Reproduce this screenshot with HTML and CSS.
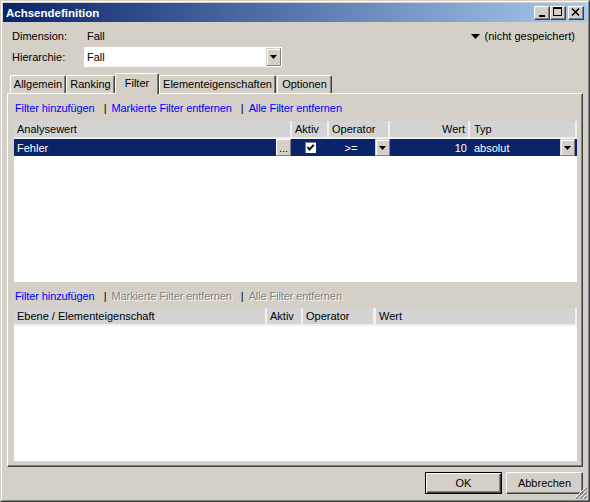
FILE: index.html
```html
<!DOCTYPE html>
<html>
<head>
<meta charset="utf-8">
<title>Achsendefinition</title>
<link rel="stylesheet" href="styles.css">
</head>
<body>
<div class="window">
  <div class="frame">
    <div class="titlebar">
      <span class="title">Achsendefinition</span>
      <div class="tbtns">
        <span class="tbtn"><svg width="14" height="12" viewBox="0 0 14 12"><rect x="4" y="8" width="6" height="2" fill="#000"/></svg></span>
        <span class="tbtn"><svg width="14" height="12" viewBox="0 0 14 12"><rect x="2" y="0" width="9" height="2" fill="#000"/><rect x="2" y="0" width="1" height="9" fill="#000"/><rect x="10" y="0" width="1" height="9" fill="#000"/><rect x="2" y="8" width="9" height="1" fill="#000"/></svg></span>
        <span class="tbtn close"><svg width="14" height="12" viewBox="0 0 14 12"><path d="M3 1.5L10 8.5M10 1.5L3 8.5" stroke="#000" stroke-width="1.6" fill="none"/></svg></span>
      </div>
    </div>
    <div class="content">
      <div class="row dim">
        <span class="lbl">Dimension:</span>
        <span class="val">Fall</span>
        <span class="status"><svg width="9" height="5" viewBox="0 0 9 5"><polygon points="0,0 9,0 4.5,5" fill="#000"/></svg><span>(nicht gespeichert)</span></span>
      </div>
      <div class="row hier">
        <span class="lbl">Hierarchie:</span>
        <div class="combo">
          <span class="combo-text">Fall</span>
          <span class="ddbtn combo-dd"><svg width="7" height="4" viewBox="0 0 7 4"><polygon points="0,0 7,0 3.5,4" fill="#000"/></svg></span>
        </div>
      </div>
      <div class="tabs">
        <span class="tab t-allg">Allgemein</span>
        <span class="tab t-rank">Ranking</span>
        <span class="tab sel t-filt">Filter</span>
        <span class="tab t-elem">Elementeigenschaften</span>
        <span class="tab t-opt">Optionen</span>
      </div>
      <div class="panel">
        <div class="links">
          <span class="lnk">Filter hinzufügen</span><span class="sep">|</span><span class="lnk">Markierte Filter entfernen</span><span class="sep">|</span><span class="lnk">Alle Filter entfernen</span>
        </div>
        <div class="grid g1">
          <div class="ghead">
            <span class="hc h1a">Analysewert</span>
            <span class="hc h1b">Aktiv</span>
            <span class="hc h1c">Operator</span>
            <span class="hc h1d">Wert</span>
            <span class="hc h1e">Typ</span>
          </div>
          <div class="grow">
            <span class="rc r1">
              <span class="cell-text">Fehler</span>
              <span class="dots">...</span>
            </span>
            <span class="rc r2">
              <svg class="chk" width="11" height="11" viewBox="0 0 11 11"><rect x="0" y="0" width="11" height="11" fill="#fff"/><rect x="0" y="0" width="11" height="1" fill="#808080"/><rect x="0" y="0" width="1" height="11" fill="#808080"/><polyline points="2.5,5 4.5,7.5 8.7,2.8" stroke="#000" stroke-width="2" fill="none"/></svg>
            </span>
            <span class="rc r3">
              <span class="op">&gt;=</span>
              <span class="ddbtn"><svg width="7" height="4" viewBox="0 0 7 4"><polygon points="0,0 7,0 3.5,4" fill="#000"/></svg></span>
            </span>
            <span class="rc r4">10</span>
            <span class="rc r5">
              <span class="cell-text typ">absolut</span>
              <span class="ddbtn"><svg width="7" height="4" viewBox="0 0 7 4"><polygon points="0,0 7,0 3.5,4" fill="#000"/></svg></span>
            </span>
          </div>
        </div>
        <div class="links links2">
          <span class="lnk">Filter hinzufügen</span><span class="sep">|</span><span class="lnk off">Markierte Filter entfernen</span><span class="sep">|</span><span class="lnk off">Alle Filter entfernen</span>
        </div>
        <div class="grid g2">
          <div class="ghead">
            <span class="hc h2a">Ebene / Elementeigenschaft</span>
            <span class="hc h2b">Aktiv</span>
            <span class="hc h2c">Operator</span>
            <span class="hc h2d">Wert</span>
          </div>
        </div>
      </div>
      <div class="buttons">
        <span class="btn default">OK</span>
        <span class="btn">Abbrechen</span>
      </div>
    </div>
  </div>
  <svg class="grip" width="12" height="12" viewBox="0 0 12 12">
    <path d="M11 0L0 11M11 4L4 11M11 8L8 11" stroke="#fff" stroke-width="1" fill="none"/>
    <path d="M12 1L1 12M12 5L5 12M12 9L9 12" stroke="#808080" stroke-width="1.4" fill="none"/>
  </svg>
</div>
</body>
</html>
```

FILE: styles.css
```css
* { box-sizing: border-box; }
html, body { margin: 0; padding: 0; }
body {
  width: 590px;
  height: 502px;
  overflow: hidden;
  background: #D4D0C8;
  font-family: "Liberation Sans", Arial, sans-serif;
  font-size: 11px;
  color: #000;
}
.window {
  position: relative;
  width: 590px;
  height: 502px;
  background: #D4D0C8;
  border: 1px solid;
  border-color: #D4D0C8 #404040 #404040 #D4D0C8;
}
.frame {
  height: 100%;
  border: 1px solid;
  border-color: #fff #808080 #808080 #fff;
  padding: 1px;
  display: flex;
  flex-direction: column;
}
.titlebar {
  height: 19px;
  flex: none;
  background: linear-gradient(to right, #0A246A, #A6CAF0);
  display: flex;
  align-items: center;
  padding: 0 3px 0 3px;
}
.title {
  color: #fff;
  font-weight: bold;
  font-size: 11.5px;
}
.tbtns {
  margin-left: auto;
  display: flex;
}
.tbtn {
  width: 16px;
  height: 14px;
  background: #D4D0C8;
  border: 1px solid;
  border-color: #fff #404040 #404040 #fff;
  box-shadow: inset -1px -1px 0 #808080;
  display: block;
}
.tbtn svg { display: block; }
.tbtn.close { margin-left: 2px; }

.content {
  flex: 1;
  display: flex;
  flex-direction: column;
}
.row {
  height: 20px;
  display: flex;
  align-items: center;
  padding-left: 9px;
  flex: none;
}
.dim { margin-top: 4px; }
.hier { margin-top: 1px; }
.lbl { width: 72px; }
.val { padding-left: 3px; }
.status {
  margin-left: auto;
  margin-right: 12px;
  display: flex;
  align-items: center;
  gap: 5px;
}
.combo {
  width: 198px;
  height: 20px;
  background: #fff;
  padding: 1px;
  display: flex;
  align-items: center;
}
.combo-text { padding-left: 2px; }
.ddbtn {
  width: 15px;
  height: 17px;
  flex: none;
  background: #D4D0C8;
  border: 1px solid;
  border-color: #D4D0C8 #808080 #808080 #D4D0C8;
  box-shadow: inset 1px 1px 0 #fff;
  display: flex;
  align-items: center;
  justify-content: center;
}
.combo-dd { margin-left: auto; height: 18px; }

.tabs {
  margin-top: 6px;
  height: 20px;
  flex: none;
  display: flex;
  align-items: flex-end;
  padding-left: 7px;
}
.tab {
  height: 18px;
  border: 1px solid;
  border-bottom: 0;
  border-color: #fff #404040 #404040 #fff;
  border-radius: 2px 2px 0 0;
  box-shadow: inset -1px 0 0 #808080;
  line-height: 16px;
  text-align: center;
  background: #D4D0C8;
}
.tab.sel {
  height: 21px;
  margin-bottom: -1px;
  padding-top: 1px;
  position: relative;
  z-index: 1;
}
.t-allg { width: 56px; }
.t-rank { width: 49px; }
.t-filt { width: 44px; }
.t-elem { width: 117px; }
.t-opt { width: 55px; margin-left: 1px; }

.panel {
  margin: 0 4px;
  height: 374px;
  flex: none;
  border: 1px solid;
  border-color: #fff #404040 #404040 #fff;
  box-shadow: inset -1px -1px 0 #808080;
  padding: 7px 5px 0 6px;
  display: flex;
  flex-direction: column;
}
.links {
  height: 14px;
  line-height: 14px;
  display: flex;
  padding-left: 1px;
  flex: none;
  white-space: nowrap;
}
.links2 { margin-top: 7px; }
.lnk { color: #0000FF; letter-spacing: -0.1px; }
.lnk.off { color: #808080; text-shadow: 1px 1px 0 #fff; }
.sep { margin: 0 5px 0 9px; color: #000; }

.grid {
  background: #fff;
  display: flex;
  flex-direction: column;
  flex: none;
}
.g1 { margin-top: 6px; height: 161px; }
.g2 { margin-top: 5px; height: 153px; }
.ghead {
  height: 18px;
  display: flex;
  background: #F0F0F0;
  padding: 0 1px 2px 0;
}
.hc {
  height: 16px;
  line-height: 16px;
  background: #D3D3D3;
  padding-left: 3px;
  white-space: nowrap;
}
.hc + .hc { border-left: 2px solid #F0F0F0; }
.h1a { width: 276px; }
.h1b { width: 37px; }
.h1c { width: 61px; }
.h1d { width: 80px; text-align: right; padding-right: 3px; }
.h1e { width: 107px; padding-left: 4px; }
.h2a { width: 251px; }
.h2b { width: 36px; }
.h2c { width: 72px; }
.h2d { width: 202px; border-left-width: 3px !important; }

.grow {
  height: 17px;
  display: flex;
  background: #0A246A;
  color: #fff;
}
.rc {
  height: 17px;
  display: flex;
  align-items: center;
  white-space: nowrap;
}
.r1 { width: 277px; }
.r2 { width: 36px; justify-content: center; padding-left: 2px; }
.r3 { width: 63px; }
.r4 { width: 79px; justify-content: flex-end; padding-right: 2px; }
.r5 { width: 107px; padding-right: 1px; }
.cell-text { padding-left: 3px; }
.typ { padding-left: 5px; }
.op { flex: 1; text-align: center; }
.r5 .ddbtn { margin-left: auto; }
.dots {
  margin-left: auto;
  width: 15px;
  height: 17px;
  background: #D4D0C8;
  color: #000;
  border: 1px solid;
  border-color: #fff #808080 #808080 #fff;
  display: flex;
  align-items: flex-end;
  justify-content: center;
  line-height: 12px;
  padding-bottom: 1px;
}
.chk { display: block; }

.buttons {
  margin-top: 5px;
  height: 22px;
  flex: none;
  display: flex;
  justify-content: flex-end;
  gap: 4px;
  padding-right: 4px;
}
.btn {
  width: 77px;
  height: 22px;
  border: 1px solid;
  border-color: #fff #404040 #404040 #fff;
  box-shadow: inset -1px -1px 0 #808080;
  display: flex;
  align-items: center;
  justify-content: center;
}
.btn.default {
  border-color: #000;
  box-shadow: inset 1px 1px 0 #fff, inset -1px -1px 0 #404040, inset -2px -2px 0 #808080;
}
.grip {
  position: absolute;
  right: 2px;
  bottom: 2px;
}
```
